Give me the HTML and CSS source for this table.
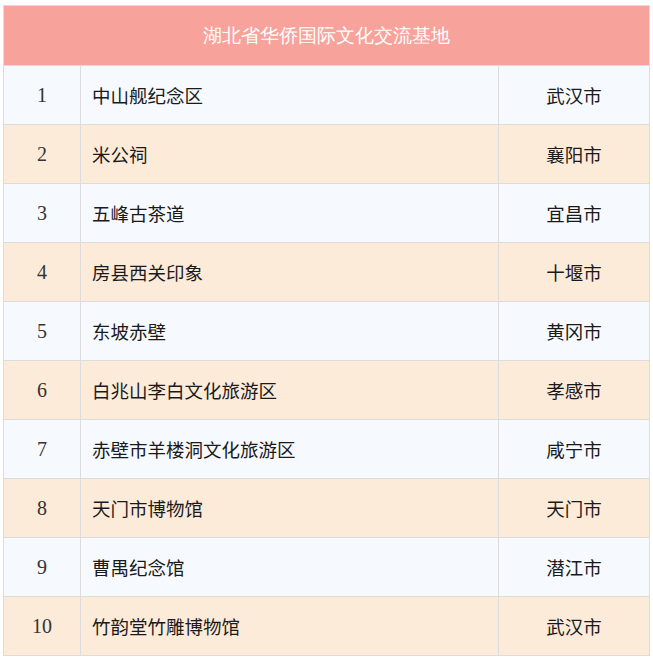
FILE: index.html
```html
<!DOCTYPE html>
<html lang="zh">
<head>
<meta charset="utf-8">
<link rel="stylesheet" href="styles.css">
</head>
<body>
<table class="list">
  <colgroup><col class="c-num"><col class="c-name"><col class="c-city"></colgroup>
  <thead>
    <tr><th colspan="3" class="title">湖北省华侨国际文化交流基地</th></tr>
  </thead>
  <tbody>
    <tr class="odd"><td class="num">1</td><td class="name">中山舰纪念区</td><td class="city">武汉市</td></tr>
    <tr class="even"><td class="num">2</td><td class="name">米公祠</td><td class="city">襄阳市</td></tr>
    <tr class="odd"><td class="num">3</td><td class="name">五峰古茶道</td><td class="city">宜昌市</td></tr>
    <tr class="even"><td class="num">4</td><td class="name">房县西关印象</td><td class="city">十堰市</td></tr>
    <tr class="odd"><td class="num">5</td><td class="name">东坡赤壁</td><td class="city">黄冈市</td></tr>
    <tr class="even"><td class="num">6</td><td class="name">白兆山李白文化旅游区</td><td class="city">孝感市</td></tr>
    <tr class="odd"><td class="num">7</td><td class="name">赤壁市羊楼洞文化旅游区</td><td class="city">咸宁市</td></tr>
    <tr class="even"><td class="num">8</td><td class="name">天门市博物馆</td><td class="city">天门市</td></tr>
    <tr class="odd"><td class="num">9</td><td class="name">曹禺纪念馆</td><td class="city">潜江市</td></tr>
    <tr class="even"><td class="num">10</td><td class="name">竹韵堂竹雕博物馆</td><td class="city">武汉市</td></tr>
  </tbody>
</table>
</body>
</html>
```
FILE: styles.css
```css
html, body { margin: 0; padding: 0; background: #ffffff; }
body { padding: 5px 3px; }
.list {
  width: 646px;
  border-collapse: collapse;
  table-layout: fixed;
}
.c-num { width: 77px; }
.c-name { width: 418px; }
.c-city { width: 151px; }
.list th, .list td { border: 1px solid #dcdcdc; padding: 0; }
.title {
  height: 59px;
  background: #f7a39b;
  color: #ffffff;
  font-family: serif;
  font-weight: normal;
  font-size: 18.7px;
  text-align: center;
}
.list td { height: 58px; vertical-align: middle; }
.odd td { background: #f6f9fe; }
.even td { background: #fdebda; }
.num {
  text-align: center;
  font-family: "Liberation Serif", "Noto Sans CJK SC", serif;
  font-size: 20px;
  color: #333333;
}
.name {
  padding-left: 11px !important;
  font-family: "Noto Sans CJK SC", sans-serif;
  font-size: 18.5px;
  color: #1a1a1a;
}
.city {
  text-align: center;
  font-family: "Noto Sans CJK SC", sans-serif;
  font-size: 18.5px;
  color: #1a1a1a;
}
```
